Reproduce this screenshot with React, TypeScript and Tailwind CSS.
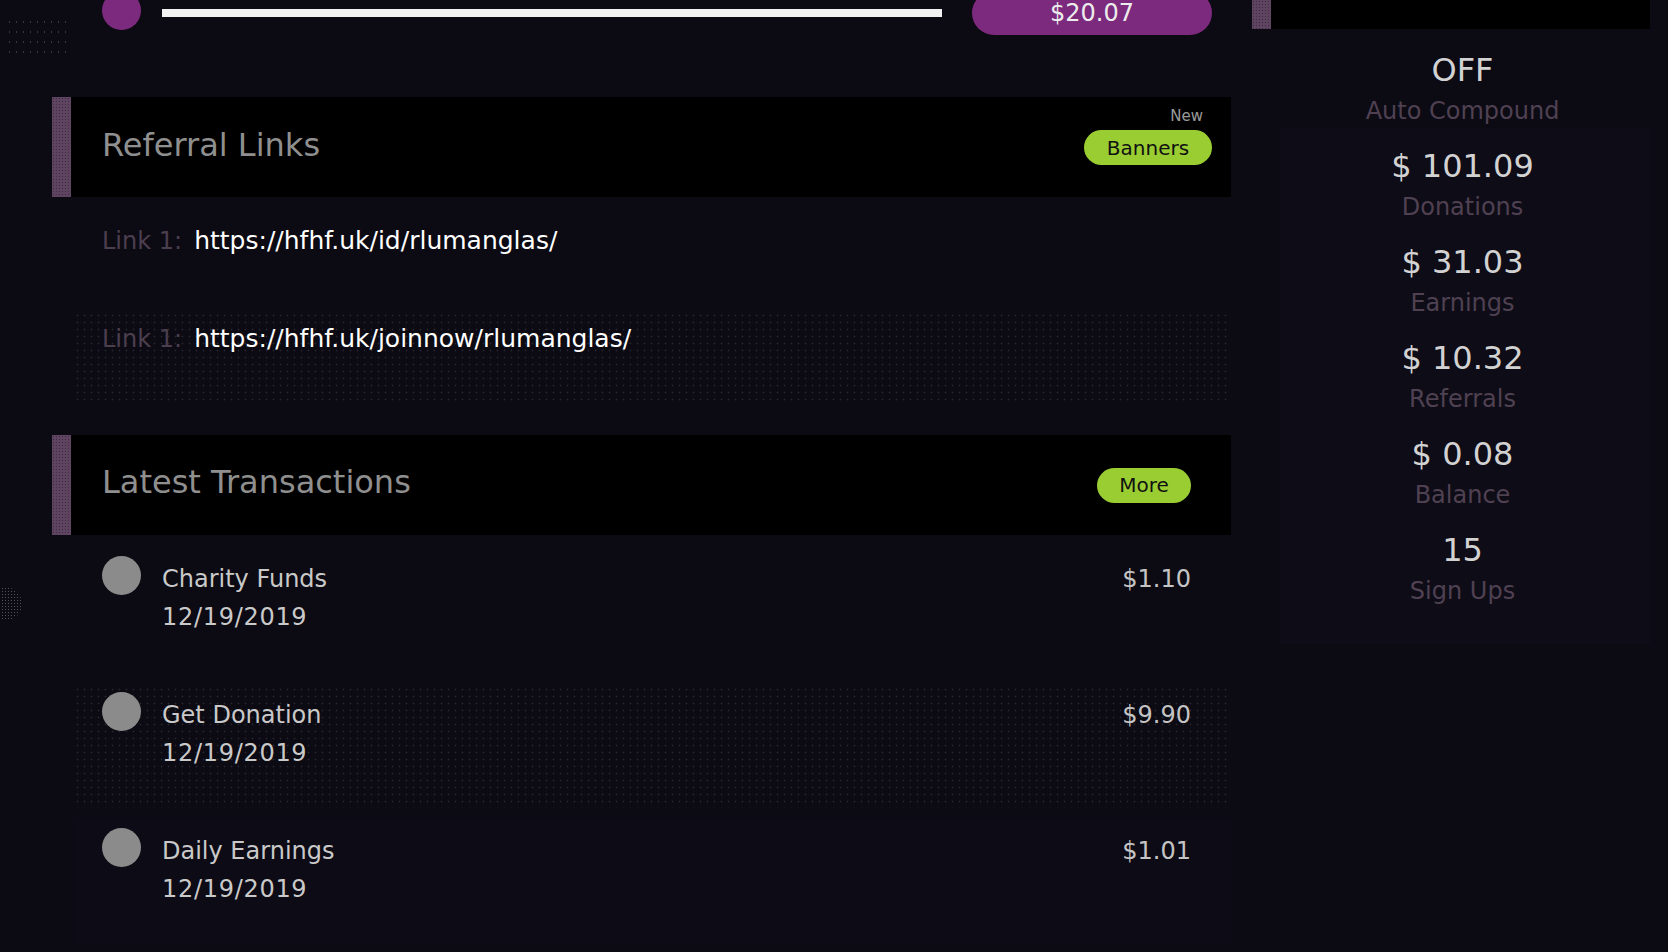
import React from "react";

const transactions = [
  { title: "Charity Funds", date: "12/19/2019", amount: "$1.10", bg: "" },
  {
    title: "Get Donation",
    date: "12/19/2019",
    amount: "$9.90",
    bg: "bg-[radial-gradient(circle,rgba(255,255,255,0.12)_0.7px,transparent_1.1px)] bg-[length:7px_7px]",
  },
  { title: "Daily Earnings", date: "12/19/2019", amount: "$1.01", bg: "bg-[#0d0b15]" },
];

const stats = [
  { value: "OFF", label: "Auto Compound" },
  { value: "$ 101.09", label: "Donations" },
  { value: "$ 31.03", label: "Earnings" },
  { value: "$ 10.32", label: "Referrals" },
  { value: "$ 0.08", label: "Balance" },
  { value: "15", label: "Sign Ups" },
];

function Accent() {
  return (
    <div className="w-[19px] shrink-0 self-stretch bg-[#5e4460] bg-[radial-gradient(circle,rgba(0,0,0,0.35)_0.7px,transparent_1px)] bg-[length:3px_3px]" />
  );
}

export default function App() {
  return (
    <div className="relative h-[952px] w-full overflow-hidden bg-[#0c0a13] font-['DejaVu_Sans',sans-serif]">
      {/* decorations on the canvas */}
      <div className="absolute left-[6px] top-[17px] h-[42px] w-[60px] bg-[radial-gradient(circle,rgba(160,160,170,0.3)_0.6px,transparent_1px)] bg-[length:7px_10px]" />
      <div className="absolute left-[-14px] top-[587px] h-[34px] w-[36px] rounded-full bg-[radial-gradient(circle,rgba(150,150,150,0.5)_0.7px,transparent_1px)] bg-[length:3px_3px]" />

      <div className="flex items-start">
        {/* Left column */}
        <div className="ml-[52px] flex w-[1179px] flex-col">
          {/* Top progress row */}
          <div className="-mt-[9px] flex h-[44px] items-center pl-[50px] pr-[19px]">
            <div className="h-[39px] w-[39px] shrink-0 self-start rounded-full bg-[#7b2a7e]" />
            <div className="ml-[21px] h-[8px] flex-1 bg-[#f2f2f2]" />
            <div className="ml-[30px] flex h-[44px] w-[240px] shrink-0 items-center justify-center rounded-full bg-[#7b2a7d] text-[24px] leading-[30px] text-[#ececec]">
              $20.07
            </div>
          </div>

          {/* Referral Links header */}
          <div className="mt-[62px] flex h-[100px] bg-black">
            <Accent />
            <div className="flex flex-1 items-center justify-between pl-[31px] pr-[19px]">
              <h2 className="pb-[4px] text-[32px] leading-[40px] text-[#8f8f8f]">Referral Links</h2>
              <div className="flex flex-col items-end self-start pt-[10px]">
                <span className="mr-[9px] text-[15px] leading-[18px] text-[#9a9a9a]">New</span>
                <button className="mt-[5px] flex h-[35px] w-[128px] items-center justify-center rounded-full bg-[#9acd32] text-[20px] leading-[24px] text-[#111]">
                  Banners
                </button>
              </div>
            </div>
          </div>

          {/* Links */}
          <div className="flex flex-col pt-[17px]">
            <div className="ml-[22px] h-[90px] pl-[28px] pt-[13px] text-[24px] leading-[28px]">
              <span className="text-[#4b3e4e]">Link 1:</span>
              <span className="ml-[12px] text-[25px] text-white">https://hfhf.uk/id/rlumanglas/</span>
            </div>
            <div className="ml-[22px] mt-[8px] h-[90px] bg-[radial-gradient(circle,rgba(255,255,255,0.12)_0.7px,transparent_1.1px)] bg-[length:7px_7px] pl-[28px] pt-[13px] text-[24px] leading-[28px]">
              <span className="text-[#4b3e4e]">Link 1:</span>
              <span className="ml-[12px] text-[25px] text-white">https://hfhf.uk/joinnow/rlumanglas/</span>
            </div>
          </div>

          {/* Latest Transactions header */}
          <div className="mt-[33px] flex h-[100px] bg-black">
            <Accent />
            <div className="flex flex-1 items-center justify-between pl-[31px] pr-[40px]">
              <h2 className="pb-[6px] text-[32px] leading-[40px] text-[#8f8f8f]">Latest Transactions</h2>
              <button className="flex h-[35px] w-[94px] items-center justify-center rounded-full bg-[#9acd32] text-[20px] leading-[24px] text-[#111]">
                More
              </button>
            </div>
          </div>

          {/* Transactions */}
          <div className="flex flex-col gap-[14px] pt-[15px]">
            {transactions.map((t) => (
              <div key={t.title} className={`ml-[22px] flex h-[122px] items-start pl-[28px] pr-[40px] ${t.bg}`}>
                <div className="mt-[6px] h-[39px] w-[39px] shrink-0 rounded-full bg-[#8b8b8b]" />
                <div className="ml-[21px] flex flex-col pt-[12px] text-[24px] text-[#c9c9c9]">
                  <span className="leading-[34px]">{t.title}</span>
                  <span className="mt-[4px] leading-[34px] tracking-[0.7px]">{t.date}</span>
                </div>
                <div className="ml-auto pt-[12px] text-[24px] leading-[34px] text-[#c4c4c4]">{t.amount}</div>
              </div>
            ))}
          </div>
        </div>

        {/* Right column */}
        <div className="ml-[21px] flex w-[398px] flex-col">
          <div className="flex h-[29px] bg-black">
            <Accent />
          </div>
          <div className="flex h-[640px] flex-col gap-[19px] bg-[linear-gradient(#0e0c16,#0e0c16)] bg-[length:370px_516px] bg-[position:28px_99px] bg-no-repeat pl-[23px] pt-[21px] text-center">
            {stats.map((s) => (
              <div key={s.label} className="flex flex-col">
                <span className="text-[32px] leading-[40px] text-[#d2d2d2]">{s.value}</span>
                <span className="mt-[5px] text-[24px] leading-[32px] text-[#4f4152]">{s.label}</span>
              </div>
            ))}
          </div>
        </div>
      </div>
    </div>
  );
}
